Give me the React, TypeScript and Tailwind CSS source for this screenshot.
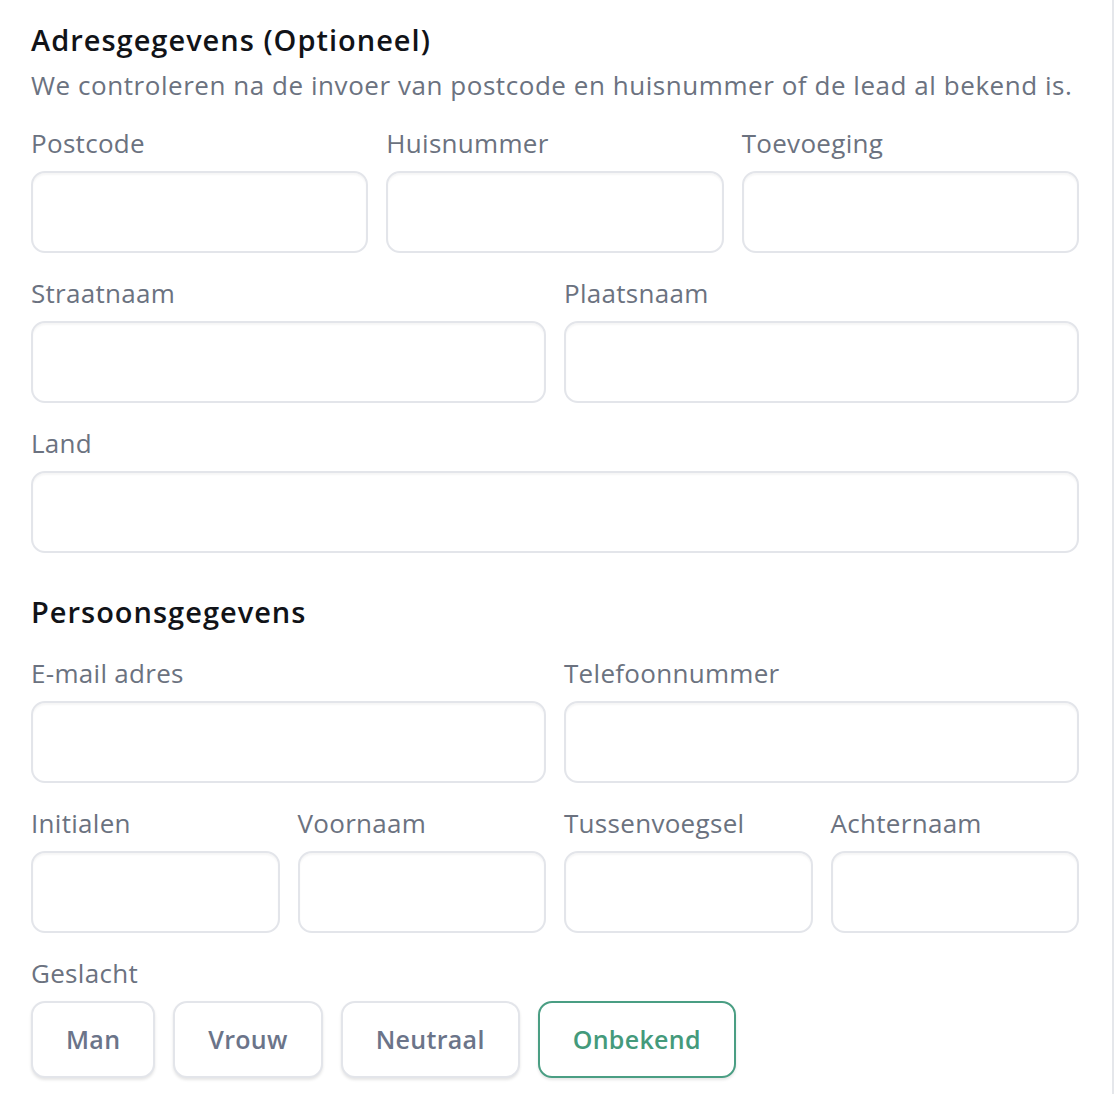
import React, { useState } from 'react';

const font = { fontFamily: '"Open Sans", "Noto Sans", sans-serif' };

const Field: React.FC<{ label: string; className?: string }> = ({ label, className }) => (
    <div className={className}>
        <label className="block text-[26px] leading-[36px] tracking-[0.3px] text-[#6b7280] mb-[10px]">{label}</label>
        <input
            type="text"
            className="w-full h-[82px] rounded-[14px] border-2 border-[#e3e5ea] bg-white px-4 text-[22px] shadow-[inset_0_2px_2px_rgba(0,0,0,0.04)] outline-none"
        />
    </div>
);

const genders = ['Man', 'Vrouw', 'Neutraal', 'Onbekend'];

const App: React.FC = () => {
    const [gender, setGender] = useState('Onbekend');

    return (
        <div className="w-[1114px] min-h-[1094px] bg-white border-r-2 border-[#e5e7eb] pl-[31px] pr-[33px] pt-[22px]" style={font}>
            <h2 className="text-[29px] leading-[36px] tracking-[1px] font-semibold text-[#111318]">Adresgegevens (Optioneel)</h2>
            <p className="mt-[9px] text-[26px] leading-[36px] tracking-[0.55px] text-[#6b7280]">
                We controleren na de invoer van postcode en huisnummer of de lead al bekend is.
            </p>

            <div className="mt-[22px] grid grid-cols-3 gap-x-[18px]">
                <Field label="Postcode" />
                <Field label="Huisnummer" />
                <Field label="Toevoeging" />
            </div>
            <div className="mt-[22px] grid grid-cols-2 gap-x-[18px]">
                <Field label="Straatnaam" />
                <Field label="Plaatsnaam" />
            </div>
            <Field label="Land" className="mt-[22px]" />

            <h2 className="mt-[41px] text-[29px] leading-[36px] tracking-[1px] font-semibold text-[#111318]">Persoonsgegevens</h2>

            <div className="mt-[25px] grid grid-cols-2 gap-x-[18px]">
                <Field label="E-mail adres" />
                <Field label="Telefoonnummer" />
            </div>
            <div className="mt-[22px] grid grid-cols-4 gap-x-[18px]">
                <Field label="Initialen" />
                <Field label="Voornaam" />
                <Field label="Tussenvoegsel" />
                <Field label="Achternaam" />
            </div>

            <div className="mt-[22px]">
                <label className="block text-[26px] leading-[36px] tracking-[0.3px] text-[#6b7280] mb-[10px]">Geslacht</label>
                <div className="flex gap-[18px]">
                    {genders.map(g => (
                        <button
                            key={g}
                            type="button"
                            onClick={() => setGender(g)}
                            className={`h-[77px] px-[33px] rounded-[14px] border-2 bg-white text-[25px] tracking-[0.3px] font-semibold shadow-[0_2px_3px_rgba(0,0,0,0.1)] ${
                                gender === g ? 'border-[#4a9e83] text-[#449a7b]' : 'border-[#e3e5ea] text-[#6b7489]'
                            }`}
                        >
                            {g}
                        </button>
                    ))}
                </div>
            </div>
        </div>
    );
};

export default App;
